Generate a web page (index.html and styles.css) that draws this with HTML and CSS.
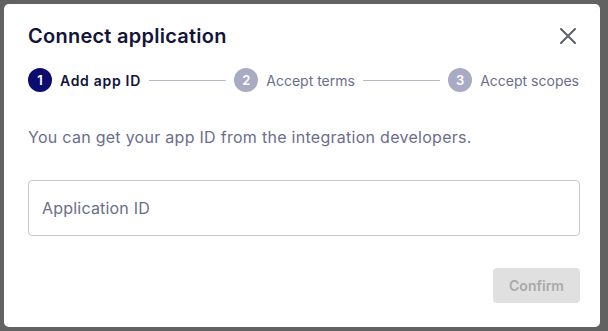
FILE: index.html
```html
<!DOCTYPE html>
<html lang="en">
  <head>
    <meta charset="UTF-8" />
    <meta name="viewport" content="width=device-width, initial-scale=1.0" />
    <title>Connect application</title>
    <link rel="stylesheet" href="styles.css">
  </head>
  <body>
    <div class="modal">
      <div class="modal-header">
        <h2 class="title">Connect application</h2>
        <button class="close-btn" aria-label="Close">
          <svg width="16" height="16" viewBox="0 0 16 16">
            <path d="M1 1 L15 15 M15 1 L1 15" stroke="#5f6068" stroke-width="2" stroke-linecap="round" />
          </svg>
        </button>
      </div>

      <!-- Stepper -->
      <div class="stepper">
        <div class="step active">
          <span class="step-num">1</span>
          <span class="step-label">Add app ID</span>
        </div>
        <div class="step-line"></div>
        <div class="step">
          <span class="step-num">2</span>
          <span class="step-label">Accept terms</span>
        </div>
        <div class="step-line"></div>
        <div class="step">
          <span class="step-num">3</span>
          <span class="step-label">Accept scopes</span>
        </div>
      </div>

      <p class="hint">You can get your app ID from the integration developers.</p>

      <input class="app-input" type="text" placeholder="Application ID" />

      <div class="actions">
        <button class="confirm-btn" disabled>Confirm</button>
      </div>
    </div>
  </body>
</html>
```

FILE: styles.css
```css
* {
  margin: 0;
  padding: 0;
  box-sizing: border-box;
}

body {
  font-family: "Inter", "Lato", sans-serif;
  background: #626262;
  padding: 4px 8px 4px 4px;
  min-height: 100vh;
}

.modal {
  background: #fff;
  border-radius: 5px;
  width: 596px;
  height: 323px;
  padding: 17px 20px 0 24px;
}

.modal-header {
  display: flex;
  justify-content: space-between;
  align-items: center;
  height: 30px;
}

.title {
  font-size: 20px;
  font-weight: 600;
  color: #14143a;
  letter-spacing: 0.25px;
}

.close-btn {
  background: none;
  border: none;
  width: 24px;
  height: 24px;
  display: flex;
  align-items: center;
  justify-content: center;
  cursor: pointer;
}

.stepper {
  display: flex;
  align-items: center;
  gap: 8px;
  margin-top: 17px;
  padding-right: 1px;
}

.step {
  display: flex;
  align-items: center;
  gap: 8px;
}

.step-num {
  width: 24px;
  height: 24px;
  border-radius: 50%;
  background: #a9abc4;
  color: #fff;
  font-size: 13px;
  font-weight: 600;
  display: flex;
  align-items: center;
  justify-content: center;
}

.step-label {
  font-size: 14px;
  color: #6b6e8c;
}

.step.active .step-num {
  background: #0c0c6e;
}

.step.active .step-label {
  color: #14143a;
  font-weight: 600;
  letter-spacing: 0.7px;
}

.step-line {
  flex: 1;
  height: 1px;
  background: #b9bac8;
}

.hint {
  margin-top: 35px;
  font-size: 16px;
  color: #6b6e8c;
  letter-spacing: 0.28px;
}

.app-input {
  display: block;
  margin-top: 33px;
  width: 552px;
  height: 56px;
  border: 1px solid #c9c9c9;
  border-radius: 4px;
  padding: 0 13px;
  font-family: inherit;
  font-size: 16px;
  color: #14143a;
  letter-spacing: 0.2px;
  outline: none;
}

.app-input::placeholder {
  color: #6b6e8c;
}

.actions {
  display: flex;
  justify-content: flex-end;
  width: 552px;
  margin-top: 32px;
}

.confirm-btn {
  background: #e0e0e0;
  color: #a9a9a9;
  border: none;
  border-radius: 4px;
  width: 87px;
  height: 35px;
  font-family: inherit;
  font-size: 14px;
  font-weight: 600;
}
```
